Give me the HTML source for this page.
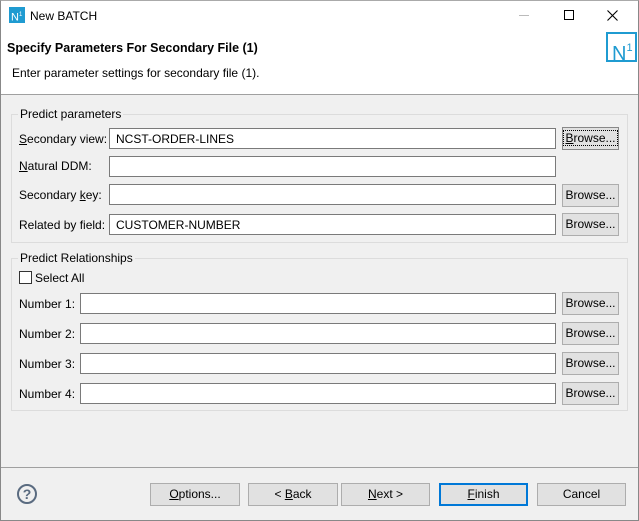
<!DOCTYPE html>
<html><head><style>
*{box-sizing:border-box;margin:0;padding:0}
body{width:639px;height:521px;overflow:hidden;font-family:"Liberation Sans",sans-serif;font-size:12px;color:#000;background:#f0f0f0;position:relative}
.win{position:absolute;left:0;top:0;width:639px;height:521px;border:1px solid #888;border-top-color:#aaa}
.abs{position:absolute}
.field{position:absolute;height:21px;background:#fff;border:1px solid #7a7a7a;padding:4px 6px 2px;line-height:13px}
.btn{position:absolute;height:23px;background:#e1e1e1;border:1px solid #adadad;text-align:center;line-height:21px;font-size:12px}
.grp{position:absolute;border:1px solid #dcdcdc}
.lbl{position:absolute;line-height:14px}
u{text-decoration:underline}
</style></head><body>
<div class="win"></div>
<div class="abs" style="left:1px;top:1px;width:637px;height:93px;background:#fff"></div>
<div class="abs" style="left:9px;top:7px;width:16px;height:16px;background:#1f9bd1;color:#fff;font-size:11px;line-height:16px;padding-left:2px">N<sup style="font-size:6px">1</sup></div>
<div class="lbl" style="left:30px;top:9px">New BATCH</div>
<div class="abs" style="left:519px;top:15px;width:10px;height:1px;background:#bbb"></div>
<div class="abs" style="left:564px;top:10px;width:10px;height:10px;border:1px solid #000"></div>
<svg class="abs" style="left:607px;top:10px" width="11" height="11"><path d="M0.5 0.5L10.5 10.5M10.5 0.5L0.5 10.5" stroke="#000" stroke-width="1.1"/></svg>
<div class="lbl" style="left:7px;top:41px;font-weight:bold;font-size:12.5px">Specify Parameters For Secondary File (1)</div>
<div class="lbl" style="left:12px;top:66px">Enter parameter settings for secondary file (1).</div>
<div class="abs" style="left:606px;top:32px;width:31px;height:30px;border:2px solid #1f9bd1;color:#1f9bd1;font-size:20px;line-height:28px;padding-left:4px">N<span style="font-size:11px;vertical-align:9px">1</span></div>
<div class="abs" style="left:1px;top:94px;width:637px;height:1px;background:#a0a0a0"></div>

<div class="grp" style="left:11px;top:114px;width:617px;height:129px"></div>
<div class="lbl" style="left:18px;top:107px;background:#f0f0f0;padding:0 2px">Predict parameters</div>
<div class="lbl" style="left:19px;top:132px"><u>S</u>econdary view:</div>
<div class="field" style="left:109px;top:128px;width:447px">NCST-ORDER-LINES</div>
<div class="btn" style="left:562px;top:127px;width:57px;border-color:#888"><span style="outline:1px dotted #000;padding:0 1px"><u>B</u>rowse...</span></div>
<div class="lbl" style="left:19px;top:159px"><u>N</u>atural DDM:</div>
<div class="field" style="left:109px;top:156px;width:447px"></div>
<div class="lbl" style="left:19px;top:188px">Secondary <u>k</u>ey:</div>
<div class="field" style="left:109px;top:184px;width:447px"></div>
<div class="btn" style="left:562px;top:184px;width:57px">Browse...</div>
<div class="lbl" style="left:19px;top:218px">Related by field:</div>
<div class="field" style="left:109px;top:214px;width:447px">CUSTOMER-NUMBER</div>
<div class="btn" style="left:562px;top:213px;width:57px">Browse...</div>

<div class="grp" style="left:11px;top:258px;width:617px;height:153px"></div>
<div class="lbl" style="left:18px;top:251px;background:#f0f0f0;padding:0 2px">Predict Relationships</div>
<div class="abs" style="left:19px;top:271px;width:13px;height:13px;background:#fff;border:1px solid #333"></div>
<div class="lbl" style="left:35px;top:271px">Select All</div>
<div class="lbl" style="left:19px;top:297px">Number 1:</div>
<div class="field" style="left:80px;top:293px;width:476px"></div>
<div class="btn" style="left:562px;top:292px;width:57px">Browse...</div>
<div class="lbl" style="left:19px;top:327px">Number 2:</div>
<div class="field" style="left:80px;top:323px;width:476px"></div>
<div class="btn" style="left:562px;top:322px;width:57px">Browse...</div>
<div class="lbl" style="left:19px;top:357px">Number 3:</div>
<div class="field" style="left:80px;top:353px;width:476px"></div>
<div class="btn" style="left:562px;top:352px;width:57px">Browse...</div>
<div class="lbl" style="left:19px;top:387px">Number 4:</div>
<div class="field" style="left:80px;top:383px;width:476px"></div>
<div class="btn" style="left:562px;top:382px;width:57px">Browse...</div>

<div class="abs" style="left:1px;top:467px;width:637px;height:1px;background:#a0a0a0"></div>
<div class="abs" style="left:17px;top:484px;width:20px;height:20px;border:2px solid #5a6b80;border-radius:50%;color:#5a6b80;font-weight:bold;font-size:14px;line-height:16px;text-align:center">?</div>
<div class="btn" style="left:150px;top:483px;width:90px"><u>O</u>ptions...</div>
<div class="btn" style="left:248px;top:483px;width:90px">&lt; <u>B</u>ack</div>
<div class="btn" style="left:341px;top:483px;width:89px"><u>N</u>ext &gt;</div>
<div class="btn" style="left:439px;top:483px;width:89px;border:2px solid #0078d7;line-height:19px"><u>F</u>inish</div>
<div class="btn" style="left:537px;top:483px;width:89px">Cancel</div>
</body></html>
